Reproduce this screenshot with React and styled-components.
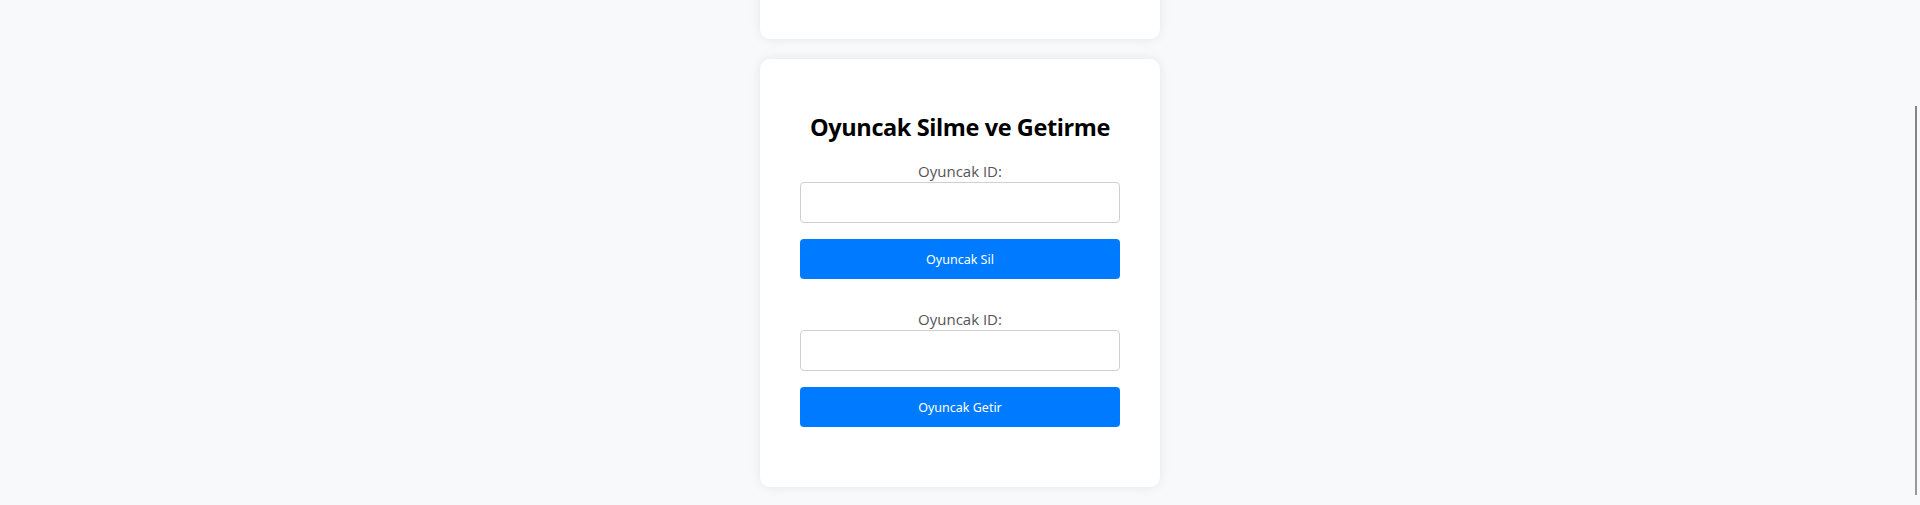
import styled, { createGlobalStyle } from 'styled-components';

const GlobalStyle = createGlobalStyle`
  body {
    margin: 0;
    background: #f8f9fa;
    font-family: "Open Sans", "Noto Sans", sans-serif;
    overflow: hidden;
  }
`;

const Page = styled.div`
  display: flex;
  flex-direction: column;
  align-items: center;
  gap: 20px;
  height: 505px;
`;

const Card = styled.div`
  width: 400px;
  box-sizing: border-box;
  background: #fff;
  border-radius: 10px;
  box-shadow: 0 0 12px rgba(0, 0, 0, 0.08);
  padding: 30px 40px;
  text-align: center;
`;

const HiddenCard = styled(Card)`
  height: 200px;
  margin-top: -161px;
  flex-shrink: 0;
`;

const Title = styled.h2`
  margin: 22px 0 18px;
  font-size: 23.5px;
  line-height: 32px;
  font-weight: 700;
  color: #000;
  letter-spacing: -0.4px;
`;

const Section = styled.div`
  margin-bottom: 30px;
`;

const Label = styled.label`
  display: block;
  font-size: 15px;
  line-height: 21px;
  color: #555;
`;

const Input = styled.input`
  display: block;
  width: 100%;
  height: 41px;
  box-sizing: border-box;
  border: 1px solid #d0d0d0;
  border-radius: 4px;
  padding: 8px 10px;
  font-size: 14px;
  margin-bottom: 16px;
`;

const Button = styled.button`
  display: block;
  width: 100%;
  height: 40px;
  border: none;
  border-radius: 4px;
  background: #007bff;
  color: #fff;
  font-family: "Noto Sans", sans-serif;
  font-size: 12.5px;
  cursor: pointer;
`;

const Scrollbar = styled.div`
  position: fixed;
  right: 3px;
  top: 106px;
  width: 2px;
  height: 389px;
  background: linear-gradient(#858585 0 50%, #999 50% 100%);
`;

export default function App() {
  return (
    <>
      <GlobalStyle />
      <Page>
        <HiddenCard />
        <Card>
          <Title>Oyuncak Silme ve Getirme</Title>
          <Section>
            <Label htmlFor="delete-id">Oyuncak ID:</Label>
            <Input id="delete-id" type="text" />
            <Button>Oyuncak Sil</Button>
          </Section>
          <Section>
            <Label htmlFor="get-id">Oyuncak ID:</Label>
            <Input id="get-id" type="text" />
            <Button>Oyuncak Getir</Button>
          </Section>
        </Card>
      </Page>
      <Scrollbar />
    </>
  );
}
